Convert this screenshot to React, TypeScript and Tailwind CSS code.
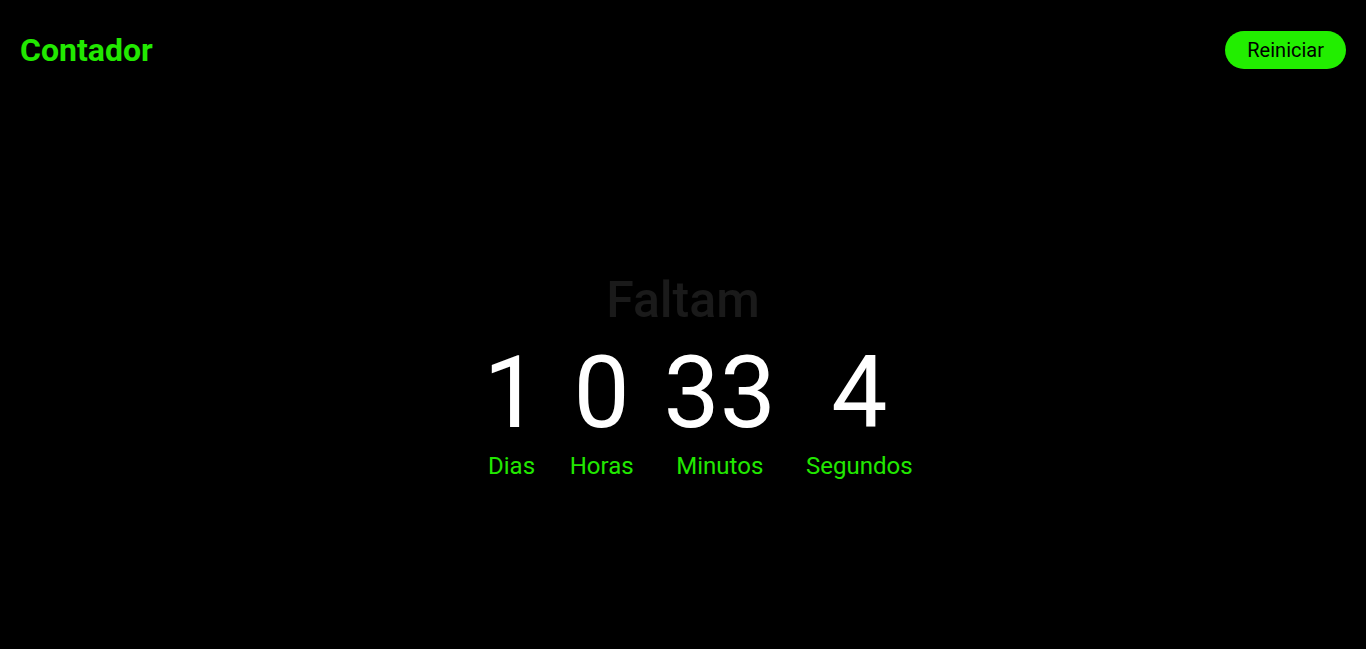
const units = [
  { value: "1", label: "Dias" },
  { value: "0", label: "Horas" },
  { value: "33", label: "Minutos" },
  { value: "4", label: "Segundos" },
];

export default function App() {
  return (
    <div
      className="min-h-screen bg-black flex flex-col"
      style={{ fontFamily: "Roboto, 'Noto Sans', sans-serif" }}
    >
      <header className="flex items-center justify-between px-5 pt-[31px]">
        <h1 className="text-[32px] font-bold text-[#22e800] leading-[38px]">Contador</h1>
        <button className="h-[38px] px-[22px] rounded-full bg-[#22ee00] text-black text-[20px] leading-none">
          Reiniciar
        </button>
      </header>

      <main className="flex flex-col items-center mt-[201px]">
        <h2 className="text-[50px] font-medium text-[#1a1a1a] leading-[60px]">Faltam</h2>
        <div className="flex mt-[4px]">
          {units.map((u) => (
            <div key={u.label} className="ml-[30px] flex flex-col items-center">
              <span className="text-white text-[100px] leading-[117px]">{u.value}</span>
              <span className="text-[#22e800] text-[24px] leading-[28px] mt-[1px]">{u.label}</span>
            </div>
          ))}
        </div>
      </main>
    </div>
  );
}
